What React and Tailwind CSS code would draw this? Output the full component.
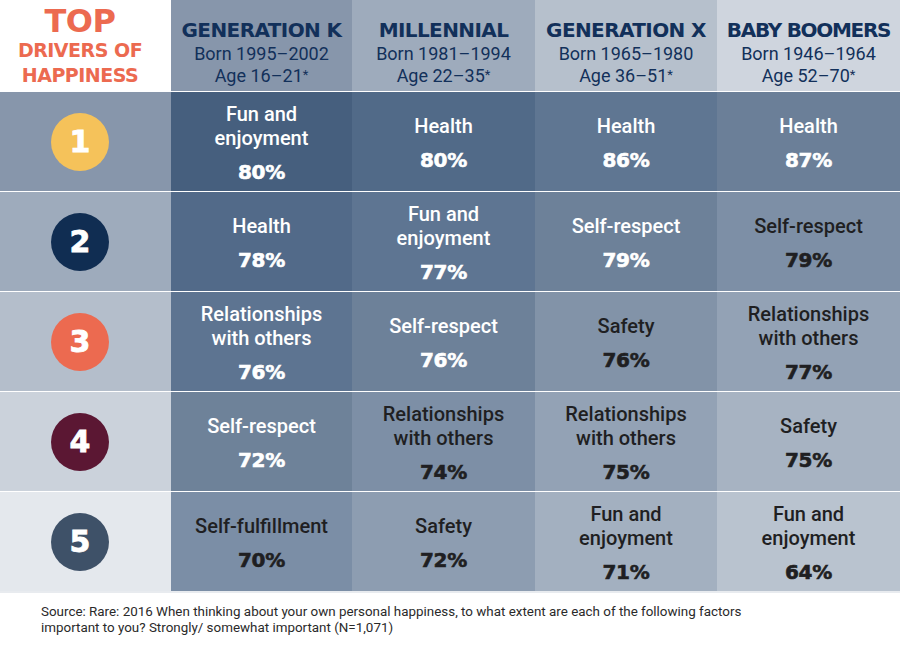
const cols = [
  { name: "GENERATION K", born: "Born 1995–2002", age: "Age 16–21", track: "tracking-[-0.6px]" },
  { name: "MILLENNIAL", born: "Born 1981–1994", age: "Age 22–35", track: "tracking-[-0.6px]" },
  { name: "GENERATION X", born: "Born 1965–1980", age: "Age 36–51", track: "tracking-[-0.6px]" },
  { name: "BABY BOOMERS", born: "Born 1946–1964", age: "Age 52–70", track: "tracking-[-1.3px]" },
];

const headBg = ["bg-[#8796ab]", "bg-[#9eabbc]", "bg-[#b6c0cc]", "bg-[#cfd5de]"];

const rows = [
  {
    n: "1",
    circle: "bg-[#f5c25a]",
    side: "bg-[#8796ab]",
    cells: [
      { label: ["Fun and", "enjoyment"], pct: "80%", bg: "bg-[#465f7e]", light: true },
      { label: ["Health"], pct: "80%", bg: "bg-[#516a88]", light: true },
      { label: ["Health"], pct: "86%", bg: "bg-[#5f7692]", light: true },
      { label: ["Health"], pct: "87%", bg: "bg-[#6b7f98]", light: true },
    ],
  },
  {
    n: "2",
    circle: "bg-[#102d52]",
    side: "bg-[#9eabbc]",
    cells: [
      { label: ["Health"], pct: "78%", bg: "bg-[#526a89]", light: true },
      { label: ["Fun and", "enjoyment"], pct: "77%", bg: "bg-[#5e7592]", light: true },
      { label: ["Self-respect"], pct: "79%", bg: "bg-[#6d8199]", light: true },
      { label: ["Self-respect"], pct: "79%", bg: "bg-[#7d8fa6]", light: false },
    ],
  },
  {
    n: "3",
    circle: "bg-[#ec6a50]",
    side: "bg-[#b4becb]",
    cells: [
      { label: ["Relationships", "with others"], pct: "76%", bg: "bg-[#5d7491]", light: true },
      { label: ["Self-respect"], pct: "76%", bg: "bg-[#6d8199]", light: true },
      { label: ["Safety"], pct: "76%", bg: "bg-[#8293a8]", light: false },
      { label: ["Relationships", "with others"], pct: "77%", bg: "bg-[#93a2b5]", light: false },
    ],
  },
  {
    n: "4",
    circle: "bg-[#5b1733]",
    side: "bg-[#cbd2db]",
    cells: [
      { label: ["Self-respect"], pct: "72%", bg: "bg-[#6e8299]", light: true },
      { label: ["Relationships", "with others"], pct: "74%", bg: "bg-[#7d8fa6]", light: false },
      { label: ["Relationships", "with others"], pct: "75%", bg: "bg-[#93a2b5]", light: false },
      { label: ["Safety"], pct: "75%", bg: "bg-[#a7b3c2]", light: false },
    ],
  },
  {
    n: "5",
    circle: "bg-[#3e5168]",
    side: "bg-[#e4e8ed]",
    cells: [
      { label: ["Self-fulfillment"], pct: "70%", bg: "bg-[#7b8ea6]", light: false },
      { label: ["Safety"], pct: "72%", bg: "bg-[#8d9db1]", light: false },
      { label: ["Fun and", "enjoyment"], pct: "71%", bg: "bg-[#a3b0c0]", light: false },
      { label: ["Fun and", "enjoyment"], pct: "64%", bg: "bg-[#b9c3cf]", light: false },
    ],
  },
];

const grid = "grid grid-cols-[171px_181px_183px_182px_183px]";

export default function App() {
  return (
    <div className="w-[900px] h-[651px] bg-white overflow-hidden font-['Roboto',sans-serif]">
      {/* header */}
      <div className={`${grid} h-[91px]`}>
        <div className="flex flex-col items-center justify-center pr-[11px] pb-[2px] bg-white text-[#ec6a50] font-['DejaVu_Sans',sans-serif] font-bold leading-none">
          <div className="text-[32px] tracking-[-0.5px] mb-[4px]">TOP</div>
          <div className="text-[19px] tracking-[-0.5px] mb-[6px]">DRIVERS OF</div>
          <div className="text-[19px] tracking-[-0.5px]">HAPPINESS</div>
        </div>
        {cols.map((c, i) => (
          <div key={c.name} className={`${headBg[i]} flex flex-col items-center justify-center text-[#12305a] pt-[13px]`}>
            <div className={`font-['DejaVu_Sans',sans-serif] font-bold text-[20px] ${c.track} leading-[25px]`}>{c.name}</div>
            <div className="text-[18px] leading-[21px]">{c.born}</div>
            <div className="text-[18px] leading-[21px]">{c.age}<span className="text-[13px] align-[3px]">*</span></div>
          </div>
        ))}
      </div>

      {/* rows */}
      {rows.map((r) => (
        <div key={r.n} className={`${grid} h-[100px] border-t border-[#ffffff40]`}>
          <div className={`${r.side} flex items-center justify-center pr-[11px]`}>
            <div className={`${r.circle} w-[58px] h-[58px] rounded-full flex items-center justify-center text-white font-['DejaVu_Sans',sans-serif] font-bold text-[30px] leading-none [-webkit-text-stroke:0.8px_#fff]`}>
              {r.n}
            </div>
          </div>
          {r.cells.map((c, j) => (
            <div
              key={j}
              className={`${c.bg} flex flex-col items-center justify-center text-center pt-[2px] ${c.light ? "text-white" : "text-[#1f1f22]"}`}
            >
              <div className="text-[20px] font-medium leading-[24px]">
                {c.label.map((l) => (
                  <div key={l}>{l}</div>
                ))}
              </div>
              <div className="mt-[11px] font-['DejaVu_Sans',sans-serif] font-bold text-[20px] leading-[22px] tracking-[-0.3px] [-webkit-text-stroke:0.6px_currentColor]">
                {c.pct}
              </div>
            </div>
          ))}
        </div>
      ))}

      {/* footer */}
      <div className="border-t-[2px] border-[#e8ebef] pl-[41px] pt-[11px] text-[13.4px] leading-[16px] text-[#2a2a2a]">
        <p>Source: Rare: 2016 When thinking about your own personal happiness, to what extent are each of the following factors</p>
        <p>important to you? Strongly/ somewhat important (N=1,071)</p>
      </div>
    </div>
  );
}
